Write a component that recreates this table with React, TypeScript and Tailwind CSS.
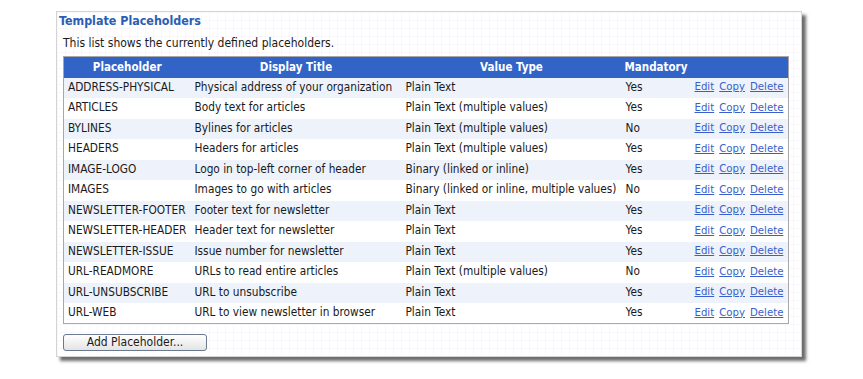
import React from "react";

const rows: [string, string, string, string][] = [
  ["ADDRESS-PHYSICAL", "Physical address of your organization", "Plain Text", "Yes"],
  ["ARTICLES", "Body text for articles", "Plain Text (multiple values)", "Yes"],
  ["BYLINES", "Bylines for articles", "Plain Text (multiple values)", "No"],
  ["HEADERS", "Headers for articles", "Plain Text (multiple values)", "Yes"],
  ["IMAGE-LOGO", "Logo in top-left corner of header", "Binary (linked or inline)", "Yes"],
  ["IMAGES", "Images to go with articles", "Binary (linked or inline, multiple values)", "No"],
  ["NEWSLETTER-FOOTER", "Footer text for newsletter", "Plain Text", "Yes"],
  ["NEWSLETTER-HEADER", "Header text for newsletter", "Plain Text", "Yes"],
  ["NEWSLETTER-ISSUE", "Issue number for newsletter", "Plain Text", "Yes"],
  ["URL-READMORE", "URLs to read entire articles", "Plain Text (multiple values)", "No"],
  ["URL-UNSUBSCRIBE", "URL to unsubscribe", "Plain Text", "Yes"],
  ["URL-WEB", "URL to view newsletter in browser", "Plain Text", "Yes"],
];

export default function App() {
  return (
    <div
      className="min-h-[379px] bg-white pt-[11px] pl-[56px] text-[11.75px] text-[#1a1a1a]"
      style={{ fontFamily: "'DejaVu Sans Condensed', 'DejaVu Sans', Verdana, sans-serif" }}
    >
      <div className="w-[746px] h-[346px] border border-[#d4d4d4] bg-white bg-[linear-gradient(to_right,#f9f7fb_1px,transparent_1px),linear-gradient(to_bottom,#f9f7fb_1px,transparent_1px)] bg-[length:8px_8px] shadow-[4px_4px_3px_rgba(60,60,60,0.75)] pl-[2px]">
        <div className="font-bold text-[12.4px] text-[#2b5db3] leading-[16px] h-[16px] pt-[1px]">Template Placeholders</div>
        <div className="pl-[4px] pt-[8px] text-[12px] leading-[14px] h-[28px]">This list shows the currently defined placeholders.</div>
        <div className="pl-[4px]">
          <table className="table-fixed border-collapse w-[725px] border border-[#a8a8a8]">
            <colgroup>
              <col className="w-[127px]" />
              <col className="w-[211px]" />
              <col className="w-[220px]" />
              <col className="w-[69px]" />
              <col className="w-[98px]" />
            </colgroup>
            <thead>
              <tr className="bg-[#3264c8] text-white text-[11.5px] h-[21px]">
                <th className="text-center font-bold px-0">Placeholder</th>
                <th className="text-center font-bold">Display Title</th>
                <th className="text-center font-bold">Value Type</th>
                <th className="text-center font-bold">Mandatory</th>
                <th></th>
              </tr>
            </thead>
            <tbody>
              {rows.map((r, i) => (
                <tr key={r[0]} className={`h-[20.5px] ${i % 2 === 0 ? "bg-[#edf2fb]" : "bg-white"}`}>
                  <td className="pl-[4px] whitespace-nowrap overflow-hidden">{r[0]}</td>
                  <td className="pl-[4px] whitespace-nowrap overflow-hidden">{r[1]}</td>
                  <td className="pl-[4px] whitespace-nowrap overflow-hidden">{r[2]}</td>
                  <td className="pl-[4px] whitespace-nowrap">{r[3]}</td>
                  <td className="pl-[4px] whitespace-nowrap text-[#3a5fcd] text-[11.3px]">
                    <span className="flex gap-[5px]">
                      <a className="underline" href="#">Edit</a>
                      <a className="underline" href="#">Copy</a>
                      <a className="underline" href="#">Delete</a>
                    </span>
                  </td>
                </tr>
              ))}
            </tbody>
          </table>
        </div>
        <div className="pl-[4px] pt-[10px]">
          <button className="w-[144px] h-[17px] rounded-[3px] border border-[#6a7a8c] bg-[linear-gradient(to_bottom,#ffffff,#e4e4e4)] text-[12px] leading-[15px] text-[#1a1a1a]">
            Add Placeholder...
          </button>
        </div>
      </div>
    </div>
  );
}
